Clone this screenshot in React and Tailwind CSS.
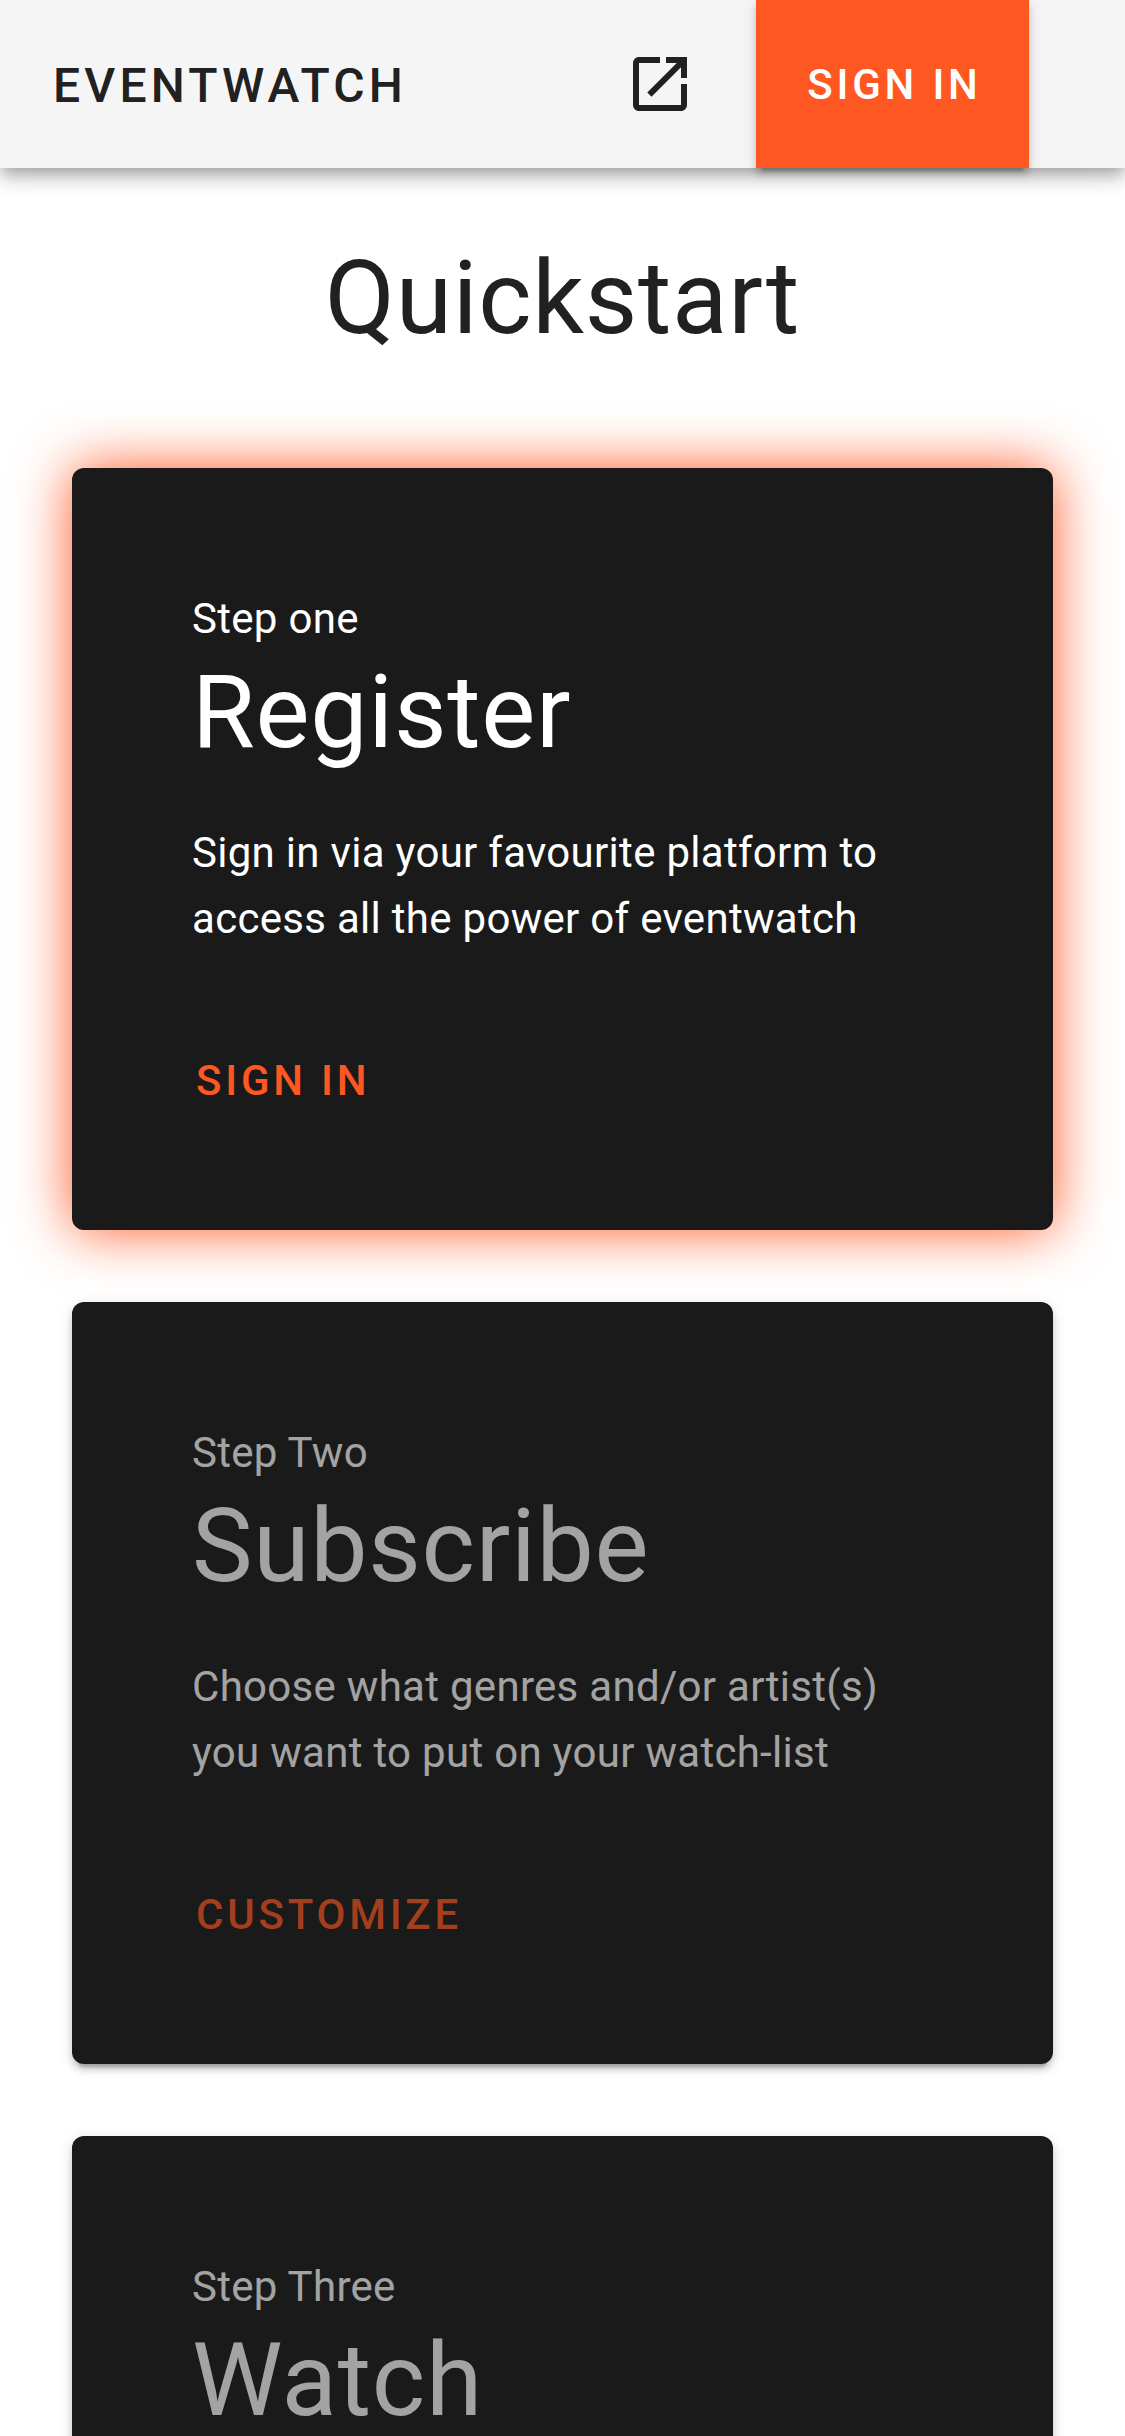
import React from "react";

const steps = [
  {
    step: "Step one",
    title: "Register",
    text: "Sign in via your favourite platform to access all the power of eventwatch",
    action: "Sign in",
    active: true,
  },
  {
    step: "Step Two",
    title: "Subscribe",
    text: "Choose what genres and/or artist(s) you want to put on your watch-list",
    action: "Customize",
  },
  { step: "Step Three", title: "Watch" },
];

function StepCard({ step, title, text, action, active }) {
  return (
    <section
      className={
        "rounded-xl bg-[#1a1a1a] px-[120px] pt-[120px] pb-24 text-white " +
        (active
          ? "shadow-[0_0_56px_#ff5722]"
          : "shadow-[0_9px_3px_-6px_rgba(0,0,0,0.2),0_6px_6px_0_rgba(0,0,0,0.14),0_3px_15px_0_rgba(0,0,0,0.12)]")
      }
    >
      <div className={active ? "" : "opacity-60"}>
        <p className="text-[42px] leading-[62px] tracking-[0.007em]">{step}</p>
        <h2 className="text-[102px] leading-[124px] tracking-[0.007em]">{title}</h2>
        {text && (
          <p className="mt-[46px] text-[42px] leading-[66px] tracking-[0.007em]">{text}</p>
        )}
        {action && (
          <button
            type="button"
            className="mt-[74px] -ml-5 h-[108px] px-6 text-[42px] font-medium tracking-[0.09em] text-[#ff5722] uppercase"
          >
            {action}
          </button>
        )}
      </div>
    </section>
  );
}

export default function App() {
  return (
    <div className="h-screen overflow-hidden bg-white font-[Roboto,sans-serif] text-[#212121]">
      <header className="flex h-[168px] items-center bg-[#f5f5f5] pr-24 pl-[53px] shadow-[0_6px_12px_-3px_rgba(0,0,0,0.2),0_12px_15px_0_rgba(0,0,0,0.14),0_3px_30px_0_rgba(0,0,0,0.12)]">
        <span className="pt-1 text-[48px] font-medium tracking-[0.087em]">EVENTWATCH</span>
        <a href="#open" aria-label="Open" className="mr-[60px] ml-auto">
          <svg viewBox="0 0 24 24" className="size-[72px]" fill="currentColor">
            <path d="M19 19H5V5h7V3H5c-1.1 0-2 .9-2 2v14c0 1.1.9 2 2 2h14c1.1 0 2-.9 2-2v-7h-2v7zM14 3v2h3.59l-9.83 9.83 1.41 1.41L19 6.41V10h2V3h-7z" />
          </svg>
        </a>
        <button
          type="button"
          className="h-full w-[273px] bg-[#ff5722] pl-1 text-[42px] font-medium tracking-[0.09em] text-white uppercase shadow-[0_9px_3px_-6px_rgba(0,0,0,0.2),0_6px_6px_0_rgba(0,0,0,0.14),0_3px_15px_0_rgba(0,0,0,0.12)]"
        >
          Sign in
        </button>
      </header>
      <main className="px-[72px]">
        <h1 className="mt-[67px] text-center text-[102px] leading-[126px] tracking-[0.007em]">
          Quickstart
        </h1>
        <div className="mt-[107px] flex flex-col gap-[72px]">
          {steps.map((s) => (
            <StepCard key={s.title} {...s} />
          ))}
        </div>
      </main>
    </div>
  );
}
